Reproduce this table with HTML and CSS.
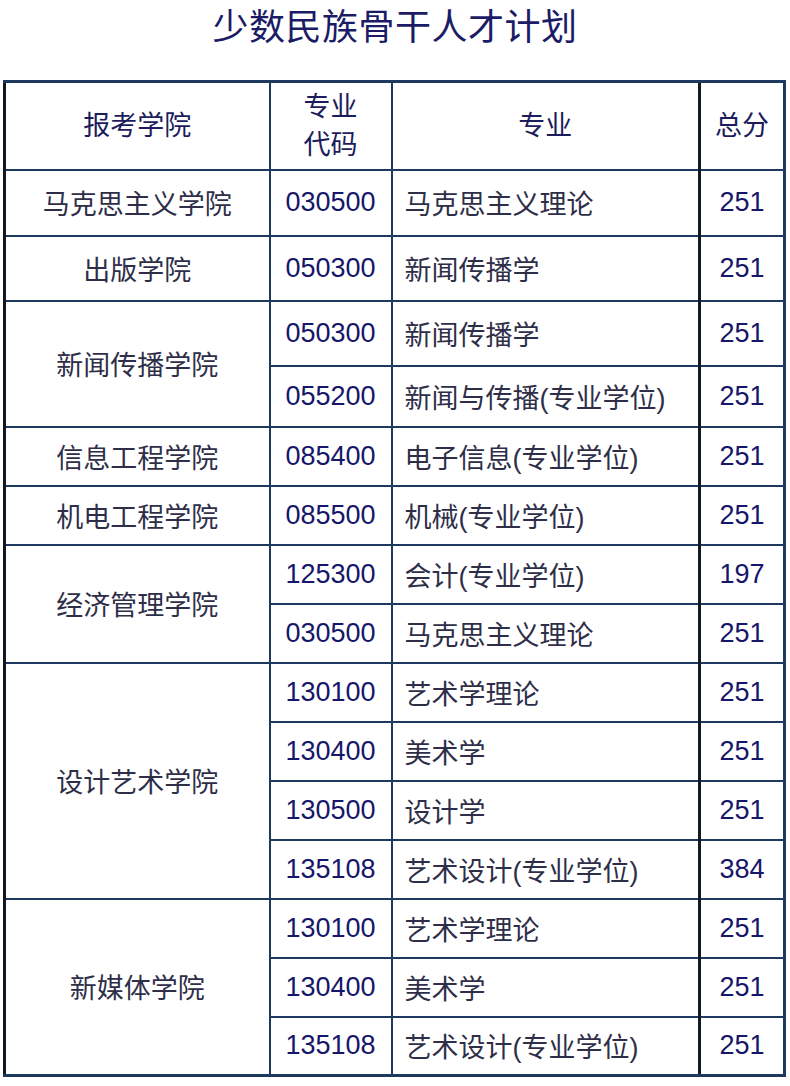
FILE: index.html
```html
<!DOCTYPE html>
<html lang="zh-CN">
<head>
<meta charset="utf-8">
<title>少数民族骨干人才计划</title>
<link rel="stylesheet" href="styles.css">
</head>
<body>
<div class="page">
  <h1 class="title">少数民族骨干人才计划</h1>
  <table class="plan">
    <colgroup>
      <col class="c-college">
      <col class="c-code">
      <col class="c-major">
      <col class="c-score">
    </colgroup>
    <thead>
      <tr class="r-head">
        <th class="col-college">报考学院</th>
        <th class="col-code">专业<br>代码</th>
        <th class="col-major-h">专业</th>
        <th class="col-score">总分</th>
      </tr>
    </thead>
    <tbody>
      <tr class="r-66">
        <td class="college">马克思主义学院</td>
        <td class="num">030500</td>
        <td class="major">马克思主义理论</td>
        <td class="num score">251</td>
      </tr>
      <tr class="r-65">
        <td class="college">出版学院</td>
        <td class="num">050300</td>
        <td class="major">新闻传播学</td>
        <td class="num score">251</td>
      </tr>
      <tr class="r-65">
        <td class="college" rowspan="2">新闻传播学院</td>
        <td class="num">050300</td>
        <td class="major">新闻传播学</td>
        <td class="num score">251</td>
      </tr>
      <tr class="r-61">
        <td class="num">055200</td>
        <td class="major">新闻与传播(专业学位)</td>
        <td class="num score">251</td>
      </tr>
      <tr class="r-59">
        <td class="college">信息工程学院</td>
        <td class="num">085400</td>
        <td class="major">电子信息(专业学位)</td>
        <td class="num score">251</td>
      </tr>
      <tr class="r-59">
        <td class="college">机电工程学院</td>
        <td class="num">085500</td>
        <td class="major">机械(专业学位)</td>
        <td class="num score">251</td>
      </tr>
      <tr class="r-59">
        <td class="college" rowspan="2">经济管理学院</td>
        <td class="num">125300</td>
        <td class="major">会计(专业学位)</td>
        <td class="num score">197</td>
      </tr>
      <tr class="r-59">
        <td class="num">030500</td>
        <td class="major">马克思主义理论</td>
        <td class="num score">251</td>
      </tr>
      <tr class="r-59">
        <td class="college" rowspan="4">设计艺术学院</td>
        <td class="num">130100</td>
        <td class="major">艺术学理论</td>
        <td class="num score">251</td>
      </tr>
      <tr class="r-59">
        <td class="num">130400</td>
        <td class="major">美术学</td>
        <td class="num score">251</td>
      </tr>
      <tr class="r-59">
        <td class="num">130500</td>
        <td class="major">设计学</td>
        <td class="num score">251</td>
      </tr>
      <tr class="r-59">
        <td class="num">135108</td>
        <td class="major">艺术设计(专业学位)</td>
        <td class="num score">384</td>
      </tr>
      <tr class="r-59">
        <td class="college" rowspan="3">新媒体学院</td>
        <td class="num">130100</td>
        <td class="major">艺术学理论</td>
        <td class="num score">251</td>
      </tr>
      <tr class="r-59">
        <td class="num">130400</td>
        <td class="major">美术学</td>
        <td class="num score">251</td>
      </tr>
      <tr class="r-59">
        <td class="num">135108</td>
        <td class="major">艺术设计(专业学位)</td>
        <td class="num score">251</td>
      </tr>
    </tbody>
  </table>
</div>
</body>
</html>
```

FILE: styles.css
```css
html, body {
  margin: 0;
  padding: 0;
  background: #ffffff;
}

body {
  font-family: "Liberation Sans", "Noto Sans CJK SC", sans-serif;
  color: #2a2a44;
}

.page {
  width: 790px;
}

.title {
  margin: 0 0 24px 0;
  height: 56px;
  line-height: 56px;
  text-align: center;
  font-size: 36px;
  font-weight: 400;
  color: #1b1b66;
  letter-spacing: 0.5px;
}

.plan {
  margin-left: 3px;
  width: 780px;
  border-collapse: collapse;
  table-layout: fixed;
  border: 3px solid #14263c;
}

.c-college { width: 265px; }
.c-code { width: 122px; }
.c-major { width: 308px; }
.c-score { width: 85px; }

.plan th,
.plan td {
  border: 2px solid #1d3a5e;
  padding: 0;
  font-size: 27px;
  font-weight: 400;
  vertical-align: middle;
}

.plan th {
  color: #1c1c5c;
  text-align: center;
  line-height: 38px;
}

.plan .col-college,
.plan .college {
  border-left: 3px solid #101820;
}

.plan .col-score,
.plan .score {
  border-left: 3px solid #121a24;
  border-right: 3px solid #1d3a5e;
}

.plan thead tr th {
  border-top: 3px solid #1d3a5e;
}

.plan tbody tr:last-child td,
.plan .college[rowspan="3"] {
  border-bottom: 3px solid #1d3a5e;
}

.r-head { height: 88px; }
.r-66 { height: 66px; }
.r-65 { height: 65px; }
.r-61 { height: 61px; }
.r-59 { height: 59px; }

.college {
  text-align: center;
  color: #2e2e48;
}

.num {
  text-align: center;
  color: #16166a;
}

.major {
  text-align: left;
  padding-left: 12px !important;
  color: #2e2e48;
}
```
